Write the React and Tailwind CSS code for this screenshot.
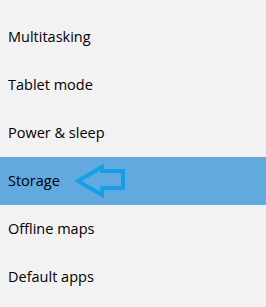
import React from "react";

const items = [
  "Multitasking",
  "Tablet mode",
  "Power & sleep",
  "Storage",
  "Offline maps",
  "Default apps",
];

export default function App() {
  return (
    <div className="w-[266px] h-[307px] bg-[#f2f2f2] pt-[13px] overflow-hidden font-['Open_Sans',sans-serif]">
      {items.map((label) => {
        const active = label === "Storage";
        return (
          <div
            key={label}
            className={`relative h-[48px] flex items-center pl-2 text-[14.5px] text-black ${
              active ? "bg-[#62a9df]" : ""
            }`}
          >
            <span className="leading-none">{label}</span>
            {active && (
              <svg
                className="absolute left-[74px] top-[7px]"
                width="56"
                height="36"
                viewBox="0 0 56 36"
              >
                <path
                  d="M4 17 L28 3 L28 7 L49 7 L49 24 L28 24 L28 31 Z"
                  fill="none"
                  stroke="#15a0e5"
                  strokeWidth="4"
                  strokeLinejoin="miter"
                />
              </svg>
            )}
          </div>
        );
      })}
    </div>
  );
}
